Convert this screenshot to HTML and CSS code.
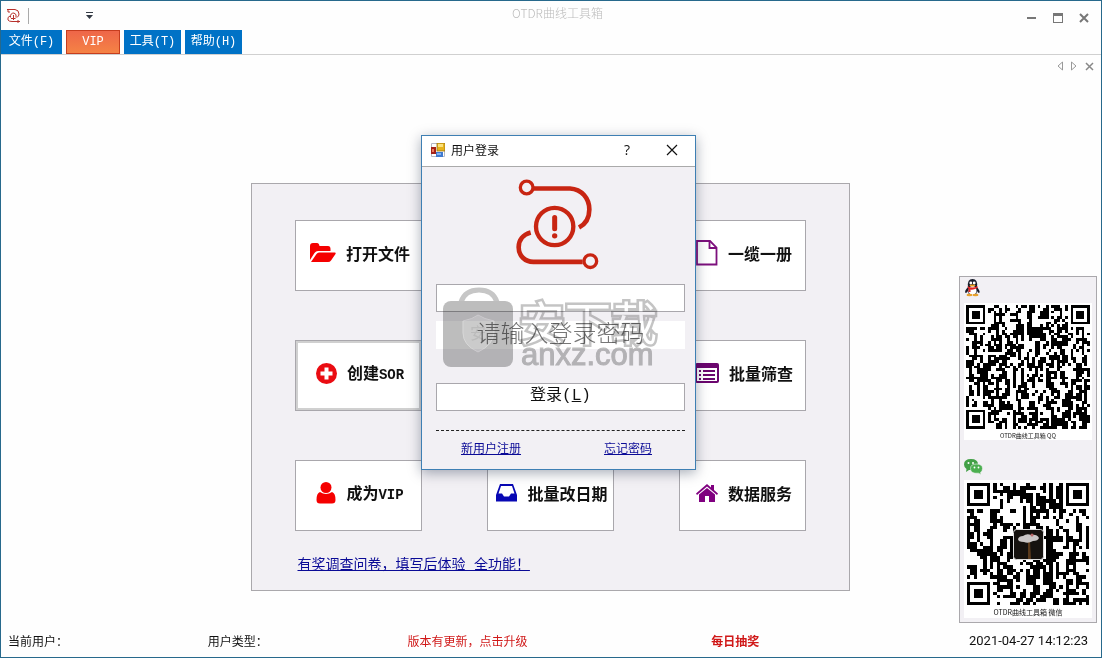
FILE: index.html
```html
<!DOCTYPE html>
<html lang="zh-CN">
<head>
<meta charset="utf-8">
<title>OTDR曲线工具箱</title>
<link rel="stylesheet" href="styles.css">
</head>
<body>
<svg class="defs" aria-hidden="true">
  <symbol id="brand" viewBox="300 143 255 278">
    <g fill="none" stroke="currentColor">
      <circle cx="335" cy="171" r="19" stroke-width="10"/>
      <path d="M357 174H465C500 176 523 203 523 237C523 262 511 281 492 291" stroke-width="14"/>
      <circle cx="419" cy="288" r="56" stroke-width="13"/>
      <path d="M419 261V295" stroke-width="15" stroke-linecap="round"/>
      <path d="M347 306C324 312 311 329 311 350C311 376 330 394 355 394H503" stroke-width="14"/>
      <circle cx="526" cy="392" r="19" stroke-width="10"/>
    </g>
    <circle cx="419" cy="316" r="8" fill="currentColor"/>
  </symbol>
</svg>
<div class="window">
  <header class="titlebar">
    <div class="quick">
      <svg class="quick-logo" width="15" height="16" viewBox="0 0 15 16" fill="none" stroke="currentColor"><path d="M1 1.500H9Q13 2 13 6Q13 8 11 9.500M2 2V4H4M4 8Q1 9 2 12Q3 13.500 6 13.500H14M4.500 9.500Q4 5 8 5Q11 6 10 9.500M7.500 7V12M5 10.500H9.500M12 12V15"/></svg>
      <span class="quick-sep"></span>
      <button class="icon-btn quick-more" type="button" aria-label="更多"><svg width="7" height="7" viewBox="0 0 7 7"><path d="M0 0H7V1H0ZM0 3H7L3.500 7Z" fill="#333a44"/></svg></button>
    </div>
    <h1 class="app-title">OTDR曲线工具箱</h1>
    <div class="controls">
      <button class="icon-btn" type="button" aria-label="最小化"><svg width="10" height="10" viewBox="0 0 10 10"><path d="M0 4H9V6H0Z" fill="#777"/></svg></button>
      <button class="icon-btn" type="button" aria-label="最大化"><svg width="10" height="10" viewBox="0 0 10 10"><path d="M0 0H10V10H0ZM1 3V9H9V3Z" fill="#777" fill-rule="evenodd"/></svg></button>
      <button class="icon-btn" type="button" aria-label="关闭"><svg width="10" height="10" viewBox="0 0 10 10"><path d="M1 1L9 9M9 1L1 9" stroke="#777" stroke-width="2"/></svg></button>
    </div>
  </header>
  <nav class="menu">
    <button class="menu-item menu-item--wide" type="button">文件(F)</button>
    <button class="menu-item menu-item--vip" type="button">VIP</button>
    <button class="menu-item" type="button">工具(T)</button>
    <button class="menu-item" type="button">帮助(H)</button>
  </nav>
  <div class="tabnav">
    <button class="icon-btn" type="button" aria-label="上一页"><svg width="6" height="10" viewBox="0 0 6 10"><path d="M5.500 1V9L1 5Z" fill="none" stroke="#999"/></svg></button>
    <button class="icon-btn" type="button" aria-label="下一页"><svg width="6" height="10" viewBox="0 0 6 10"><path d="M.5 1V9L5 5Z" fill="none" stroke="#999"/></svg></button>
    <button class="icon-btn" type="button" aria-label="关闭页"><svg width="9" height="9" viewBox="0 0 9 9"><path d="M1 1L8 8M8 1L1 8" stroke="#888" stroke-width="1.500"/></svg></button>
  </div>
  <main class="main">
    <section class="panel">
      <div class="tiles">
        <button class="tile" type="button">
          <svg width="26" height="20" viewBox="0 0 26 20" fill="#f50000"><path d="M0 17V3Q0 0 3 0H7Q9 0 9.500 3H18Q20.500 3 20.500 6V8H8Q6 8 4.500 10Z"/><path d="M1 19L6.500 11Q7.500 9.500 9 9.500H25Q26 9.500 25.500 11L21 17.500Q20 19 18 19Z"/></svg>
          <span>打开文件</span>
        </button>
        <button class="tile tile--right" type="button">
          <svg width="22" height="26" viewBox="0 0 22 26" fill="none" stroke="#7d107d" stroke-width="1.800"><path d="M1 1H14L20.500 7.500V24.500H1Z"/><path d="M13.500 1V8H20.500"/></svg>
          <span>一缆一册</span>
        </button>
        <button class="tile tile--focus" type="button">
          <svg width="21" height="21" viewBox="0 0 21 21"><circle cx="10.500" cy="10.500" r="10.500" fill="#ea0c12"/><path d="M10.500 4.500V16.500M4.500 10.500H16.500" stroke="#fff" stroke-width="4"/></svg>
          <span>创建<span class="latin">SOR</span></span>
        </button>
        <button class="tile tile--right" type="button">
          <svg width="24" height="20" viewBox="0 0 24 20"><rect width="24" height="20" rx="2" fill="#6b066e"/><path d="M2 5H22V18H2Z" fill="#fff"/><path d="M4 7H6V9H4ZM4 11H6V13H4ZM4 15H6V17H4ZM8 7H20V9H8ZM8 11H20V13H8ZM8 15H20V17H8Z" fill="#6b066e"/></svg>
          <span>批量筛查</span>
        </button>
        <button class="tile" type="button">
          <svg width="20" height="22" viewBox="0 0 20 22" fill="#f50000"><circle cx="10" cy="5.500" r="5.500"/><path d="M4 10Q10 14 16 10Q19.500 11 19.500 18Q19.500 21.500 16 21.500H4Q.5 21.500 .5 18Q.5 11 4 10Z"/></svg>
          <span>成为<span class="latin">VIP</span></span>
        </button>
        <button class="tile" type="button">
          <svg width="21" height="18" viewBox="0 0 21 18"><path d="M4 0H17L21 11V17.500H0V11ZM5 2L2.500 9.500H6L8 12.500H13L15 9.500H18.500L16 2Z" fill="#0808b4" fill-rule="evenodd"/></svg>
          <span>批量改日期</span>
        </button>
        <button class="tile" type="button">
          <svg width="22" height="18" viewBox="0 0 22 18" fill="#800080"><path d="M0 9.500L11 0L15 3.400V1H18V6L22 9.500L21 11L11 2.500L1 11Z"/><path d="M3 10.500L11 4L19 10.500V18H13V12H9V18H3Z"/></svg>
          <span>数据服务</span>
        </button>
      </div>
      <a class="survey" href="#survey">有奖调查问卷，填写后体验 全功能！</a>
    </section>
    <aside class="contact">
      <svg class="contact-icon" width="18" height="18" viewBox="0 0 18 18" role="img" aria-label="QQ"><path d="M4 8Q3 0 8.500 0Q14 0 13 8Q17 13 15 14Q14 14 13 12L12 16H5L4 12Q3 14 1.500 14Q0 12 4 8Z" fill="#171c2a"/><ellipse cx="8.500" cy="11.500" rx="4" ry="4.500" fill="#fff"/><circle cx="6.800" cy="4" r="1.400" fill="#fff"/><circle cx="10.200" cy="4" r="1.400" fill="#fff"/><path d="M3.500 7Q8.500 10 13.500 7V9Q8.500 11.500 6.500 10.500V13H4.500V10Z" fill="#e32222"/><ellipse cx="8.500" cy="6.400" rx="3" ry="1" fill="#f1a11b"/><ellipse cx="5.500" cy="16" rx="3" ry="1.300" fill="#e8a12c"/><ellipse cx="11.500" cy="16" rx="3" ry="1.300" fill="#e8a12c"/></svg>
      <figure class="qr">
        <svg class="qr-code" data-size="45" data-seed="7" role="img" aria-label="QQ 二维码"></svg>
        <figcaption class="qr-caption qr-caption--small">OTDR曲线工具箱 QQ</figcaption>
      </figure>
      <svg class="contact-icon contact-icon--wechat" width="19" height="16" viewBox="0 0 19 16" role="img" aria-label="微信"><path d="M7 0Q14 0 14 5.500Q14 11 7 11L5 11L2 13L2.500 10Q0 8.500 0 5.500Q0 0 7 0Z" fill="#43a047"/><circle cx="4.500" cy="4" r="1" fill="#fff"/><circle cx="9" cy="4" r="1" fill="#fff"/><path d="M12.500 5Q18.500 5 18.500 9.500Q18.500 12 16.500 13.500L17 15.500L14.500 14.200Q6.500 15 6.500 9.500Q6.500 5 12.500 5Z" fill="#4caf50" stroke="#f2f0f4" stroke-width=".6"/><circle cx="10.500" cy="8.500" r=".9" fill="#fff"/><circle cx="14.500" cy="8.500" r=".9" fill="#fff"/></svg>
      <figure class="qr qr--wechat">
        <div class="qr-stack">
          <svg class="qr-code" data-size="37" data-seed="23" role="img" aria-label="微信二维码"></svg>
          <svg class="qr-avatar" width="31" height="31" viewBox="0 0 31 31"><rect x=".5" y=".5" width="30" height="30" rx="3" fill="#15120f" stroke="#ddd"/><path d="M15 12H17L18 30H15Z" fill="#5a3a1c"/><path d="M5 10Q6 7 10 7Q14 4 18 6Q24 5 26 9Q25 12 20 12Q15 15 11 13Q5 13 5 10Z" fill="#c9c6c6"/><circle cx="19" cy="6" r="1.500" fill="#b96868"/></svg>
        </div>
        <figcaption class="qr-caption">OTDR曲线工具箱 微信</figcaption>
      </figure>
    </aside>
  </main>
  <footer class="status">
    <span>当前用户：</span>
    <span>用户类型：</span>
    <a class="status-link" href="#update">版本有更新，点击升级</a>
    <a class="status-link status-link--bold" href="#lottery">每日抽奖</a>
    <time class="clock" datetime="2021-04-27T14:12:23">2021-04-27 14:12:23</time>
  </footer>

  <form class="dialog" role="dialog" aria-labelledby="login-title">
    <div class="dialog-bar">
      <svg width="14" height="14" viewBox="0 0 14 14"><path d="M.5.500H13.500V13.500H.5Z" fill="#fff" stroke="#b5b9c4"/><rect x="6" y="0" width="8" height="8" fill="#e8b41c" stroke="#9a7414" stroke-width=".8"/><rect x="7" y="1" width="5" height="3" fill="#fbe27c"/><rect x="0" y="4" width="5" height="7" fill="#a32218"/><rect x="1" y="6" width="2" height="3" fill="#ee7b5d"/><rect x="5" y="9" width="7" height="5" fill="#3f79cf"/><rect x="6" y="10" width="4" height="2" fill="#82b0ef"/></svg>
      <h2 class="dialog-title" id="login-title">用户登录</h2>
      <button class="icon-btn help" type="button">?</button>
      <button class="icon-btn" type="button" aria-label="关闭"><svg width="12" height="12" viewBox="0 0 12 12"><path d="M1 1L11 11M11 1L1 11" stroke="#111" stroke-width="1.200"/></svg></button>
    </div>
    <div class="dialog-body">
      <svg class="brand" width="85" height="93"><use href="#brand"/></svg>
      <input class="field" type="text" aria-label="用户名">
      <input class="field field--password" type="password" aria-label="登录密码" placeholder="请输入登录密码">
      <button class="login" type="submit">登录(<u>L</u>)</button>
      <div class="dialog-links">
        <a href="#register">新用户注册</a>
        <a href="#forgot">忘记密码</a>
      </div>
    </div>
    <div class="mark">
      <svg width="70" height="80" viewBox="0 0 70 80"><path d="M18 15Q22 3 36 3Q50 3 54 15" fill="none" stroke="#c6c6c6" stroke-width="5"/><rect y="14" width="70" height="66" rx="8" fill="#bdbdbd"/><path d="M20 34Q30 32 35 28Q41 32 51 34V46Q50 58 35 65Q20 58 20 46Z" fill="#cbcbcb" stroke="#d8d8d8"/><text class="mark-shield" x="35" y="52" text-anchor="middle">安</text></svg>
      <div class="mark-words"><span class="mark-name">安下载</span><span class="mark-site">anxz.com</span></div>
    </div>
  </form>
</div>
<script src="qr.js"></script>
</body>
</html>
```
FILE: styles.css
```css
* { box-sizing: border-box; }

body {
  margin: 0;
  font: 12px/16px "Noto Sans CJK SC", sans-serif;
  color: #111;
}

button, input { font: inherit; color: inherit; margin: 0; }

.defs { display: none; }

.window {
  position: relative;
  display: flex;
  flex-direction: column;
  min-height: 100vh;
  border: 1px solid #27698c;
  background: #fefefe;
}

.icon-btn {
  display: flex;
  align-items: center;
  padding: 0;
  border: 0;
  background: none;
}

/* Title bar */
.titlebar {
  display: grid;
  grid-template-columns: 1fr auto 1fr;
  align-items: center;
  height: 29px;
  padding: 0 12px 0 5px;
}

.quick { display: flex; align-items: center; color: #b7302b; }
.quick-sep { width: 1px; height: 16px; margin-left: 7px; background: #aaa; }
.quick-more { margin-left: 57px; }
.app-title { margin: 0 0 5px; padding-left: 20px; font-size: 12px; font-weight: 300; color: #bbb; }
.controls { display: flex; justify-content: flex-end; gap: 16px; padding-top: 4px; }

/* Menu */
.menu {
  display: flex;
  gap: 4px;
  height: 25px;
  border-bottom: 1px solid #d0d0d0;
}

.menu-item {
  width: 57px;
  padding: 0;
  border: 0;
  background: #0072c6;
  color: #fff;
  font: 12px/16px "Liberation Mono", "Noto Sans CJK SC", monospace;
}

.menu-item--wide { width: 61px; }

.menu-item--vip {
  width: 54px;
  border: 1px solid #c63d1e;
  background: linear-gradient(#ee6649, #f58345);
}

.tabnav { display: flex; justify-content: flex-end; align-items: center; gap: 8px; height: 22px; padding-right: 7px; }

/* Main area */
.main {
  flex: 1;
  display: grid;
  grid-template-columns: 1fr auto 1fr;
  align-items: end;
  padding-right: 2px;
}

.panel {
  grid-column: 2;
  margin-bottom: 32px;
  padding: 36px 43px 13px;
  border: 1px solid #aaa8ac;
  background: #f2f0f4;
}

.tiles {
  display: grid;
  grid-template-columns: repeat(3, 127px);
  gap: 49px 65px;
}

.tile {
  display: flex;
  align-items: center;
  justify-content: center;
  gap: 10px;
  height: 71px;
  padding: 0 0 5px 4px;
  border: 1px solid #a9a7ac;
  background: #fff;
  font-size: 16px;
  font-weight: 700;
  line-height: 22px;
  white-space: nowrap;
}

.tile--right { grid-column: 3; }
.tile--focus { box-shadow: inset 0 0 0 2px #d0d0d0; }
.latin { font-family: "Liberation Mono", monospace; font-size: 14px; }

.survey {
  display: inline-block;
  margin: 22px 0 0 3px;
  color: #0a0a96;
  font: 14px/24px "Liberation Mono", "Noto Sans CJK SC", monospace;
}

/* Contact codes */
.contact {
  display: flex;
  flex-direction: column;
  justify-self: end;
  width: 138px;
  margin-right: 2px;
  padding: 2px 4px 4px;
  border: 1px solid #aaa8ac;
  background: #f2f0f4;
}

.contact-icon--wechat { margin-top: 19px; }
.qr { margin: 6px 0 0; padding: 2px 2px 0; background: #fff; }
.qr--wechat { margin-top: 5px; padding: 3px 3px 0; }
.qr-stack { display: grid; place-items: center; }
.qr-stack > * { grid-area: 1 / 1; }
.qr-code { display: block; width: 100%; aspect-ratio: 1; }
.qr-caption { padding: 3px 0 2px; font-size: 7px; line-height: 8px; text-align: center; }
.qr-caption--small { padding: 3px 0 0; font-size: 6px; }

/* Status bar */
.status {
  display: grid;
  grid-template-columns: 200fr 200fr 304fr 258fr auto;
  align-items: center;
  height: 34px;
  padding: 2px 13px 0 7px;
}

.status-link { color: #d01818; text-decoration: none; }
.status-link--bold { font-weight: 700; }
.clock { font: 13px/16px Roboto, sans-serif; }

/* Login dialog floats over the main window */
.dialog {
  position: absolute;
  top: 134px;
  left: calc(50% - 130px);
  width: 275px;
  border: 1px solid #3e7fb3;
  background: #f2f0f4;
  box-shadow: 0 3px 12px rgba(0, 20, 50, .35);
}

.dialog-bar {
  display: flex;
  align-items: center;
  height: 31px;
  padding: 0 17px 2px 9px;
  border-bottom: 1px solid #aaa;
  background: #fff;
}

.dialog-title { flex: 1; margin: 0 0 0 6px; font-size: 12px; font-weight: 400; }
.help { margin-right: 36px; font: 14px/16px "Open Sans", sans-serif; }

.dialog-body { display: flex; flex-direction: column; padding: 11px 10px 13px 14px; }
.brand { align-self: center; margin: 0 6px 13px 0; color: #c82512; }

.field, .login {
  width: 100%;
  height: 28px;
  padding: 0 4px;
  border: 1px solid #a9a7ac;
  background: #fff;
  text-align: center;
}

.field--password { margin-top: 9px; padding-bottom: 8px; border-color: #fff; font-size: 24px; line-height: 24px; }
.field--password::placeholder { color: #777; font-weight: 300; opacity: 1; }

.login {
  margin-top: 34px;
  padding-bottom: 3px;
  font: 16px/20px "Liberation Mono", "Noto Sans CJK SC", monospace;
}

.dialog-links {
  display: flex;
  justify-content: space-between;
  margin-top: 19px;
  padding: 9px 33px 0 25px;
  border-top: 1px dashed #222;
}

.dialog-links a { color: #0a0a96; }

/* Translucent stamp laid over the form */
.mark {
  position: absolute;
  top: 151px;
  left: 21px;
  display: flex;
  gap: 6px;
  mix-blend-mode: multiply;
  pointer-events: none;
}

.mark-shield { font-size: 16px; fill: #bbb; }
.mark-words { display: flex; flex-direction: column; }

.mark-name {
  padding-top: 10px;
  font-size: 46px;
  line-height: 46px;
  color: #fff;
  -webkit-text-stroke: 5px #c4c4c4;
  paint-order: stroke fill;
}

.mark-site { padding-left: 2px; font: 31px/24px "Liberation Sans", sans-serif; color: #bdbdbd; -webkit-text-stroke: 1px #bdbdbd; }
```
FILE: qr.js
```js
document.querySelectorAll('.qr-code').forEach(function (svg) {
  var n = Number(svg.dataset.size);
  var state = Number(svg.dataset.seed);
  function next() {
    state = (state * 1103515245 + 12345) % 2147483648;
    return state / 2147483648;
  }
  var grid = [];
  for (var y = 0; y < n; y++) {
    grid.push([]);
    for (var x = 0; x < n; x++) {
      var r = next();
      // Vertical runs: a module often repeats the one above it.
      grid[y].push(y > 0 && r < 0.3 ? grid[y - 1][x] : next() < 0.52);
    }
  }
  function square(cx, cy, outer, dark) {
    for (var dy = -outer; dy <= outer; dy++) {
      for (var dx = -outer; dx <= outer; dx++) {
        var gx = cx + dx, gy = cy + dy;
        if (gx < 0 || gy < 0 || gx >= n || gy >= n) continue;
        grid[gy][gx] = dark(Math.max(Math.abs(dx), Math.abs(dy)));
      }
    }
  }
  function finder(d) { return d < 2 || d === 3; }
  square(3, 3, 4, finder);
  square(n - 4, 3, 4, finder);
  square(3, n - 4, 4, finder);
  var d = '';
  grid.forEach(function (row, gy) {
    row.forEach(function (on, gx) {
      if (on) d += 'M' + gx + ' ' + gy + 'h1v1h-1z';
    });
  });
  svg.setAttribute('viewBox', '0 0 ' + n + ' ' + n);
  var path = document.createElementNS('http://www.w3.org/2000/svg', 'path');
  path.setAttribute('d', d);
  path.setAttribute('shape-rendering', 'crispEdges');
  svg.appendChild(path);
});
```
